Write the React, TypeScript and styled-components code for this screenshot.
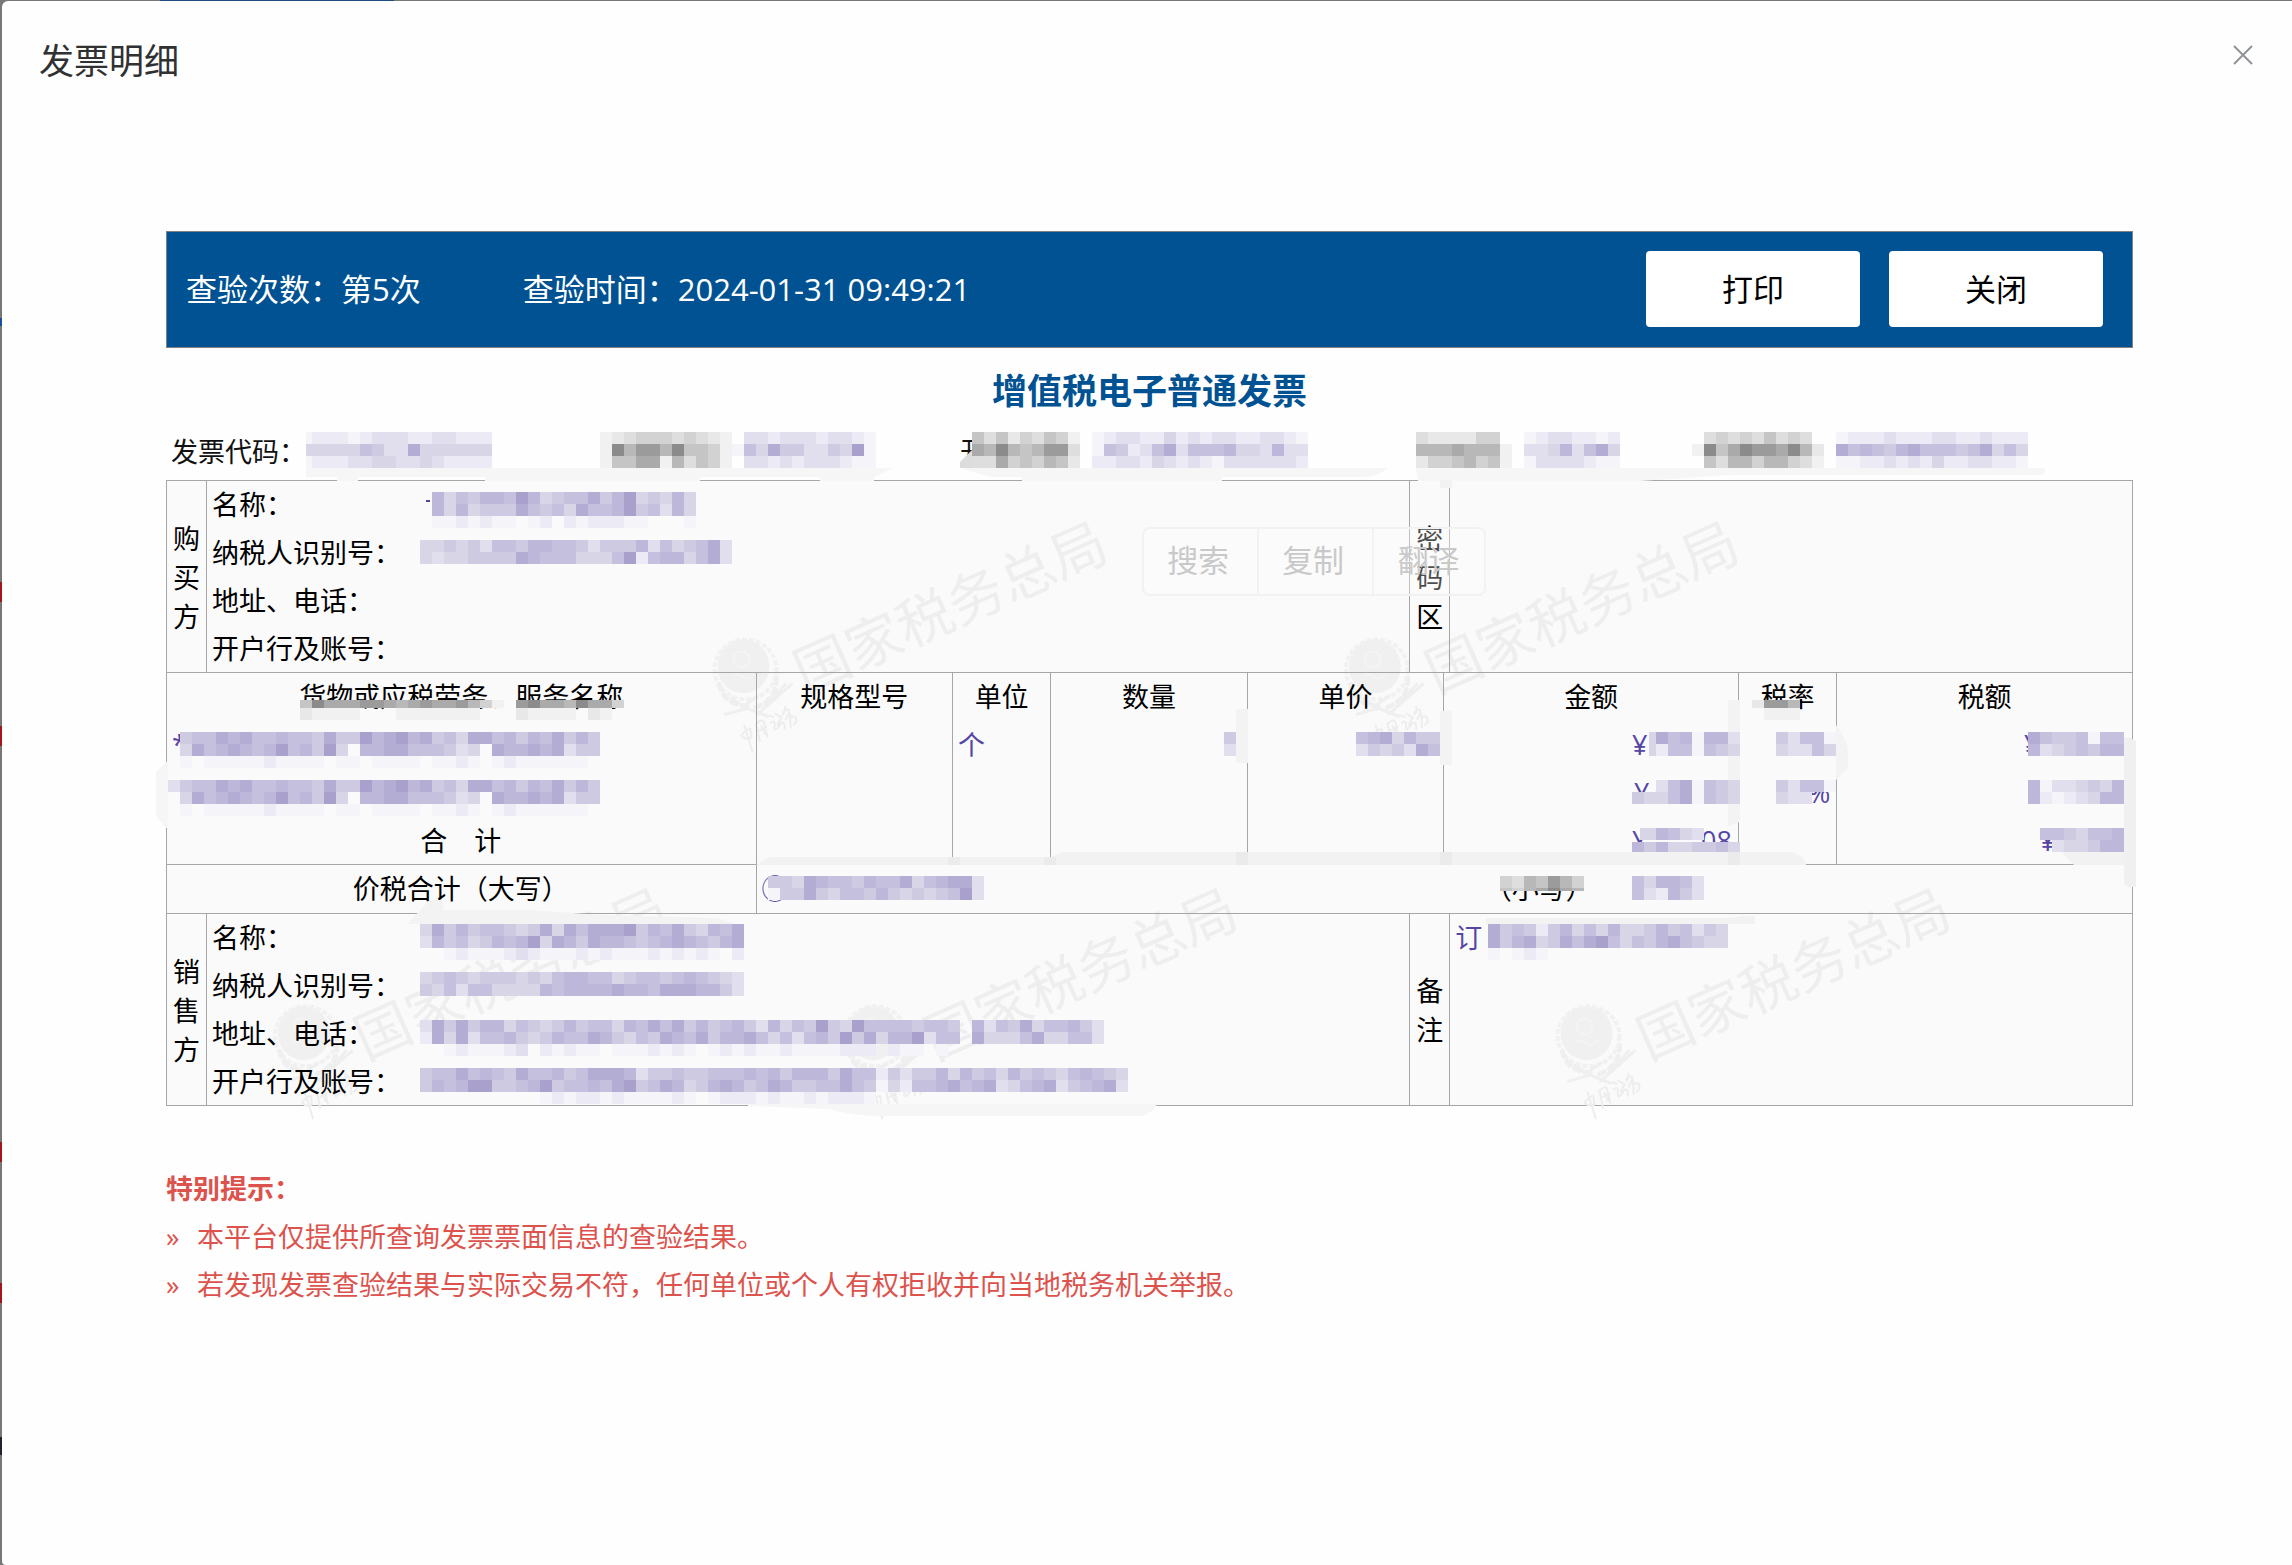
import React from "react";
import styled, { createGlobalStyle } from "styled-components";

const BLUE = "#005293";
const LINE = "#a6a6a6";
const VALUE = "#5546a5";

const GlobalStyle = createGlobalStyle`
  * { box-sizing: border-box; }
  body {
    margin: 0;
    background: #777;
    color: #000;
    font-family: "Open Sans", "Noto Sans CJK SC", sans-serif;
    font-size: 27px;
    line-height: 48px;
  }
`;

const Backdrop = styled.div`
  min-height: 100vh;
  padding: 1px 0 0 2px;
  background:
    linear-gradient(#1f4a80, #1f4a80) 160px 0 / 234px 1px no-repeat,
    linear-gradient(#a3161b, #a3161b) 0 582px / 2px 20px no-repeat,
    linear-gradient(#a3161b, #a3161b) 0 726px / 2px 20px no-repeat,
    linear-gradient(#a3161b, #a3161b) 0 1142px / 2px 20px no-repeat,
    linear-gradient(#a3161b, #a3161b) 0 1283px / 2px 20px no-repeat,
    linear-gradient(#1a4f9a, #1a4f9a) 0 318px / 2px 8px no-repeat,
    linear-gradient(#22222c, #22222c) 0 1437px / 2px 18px no-repeat,
    #777;
`;

const Dialog = styled.main`
  min-height: calc(100vh - 1px);
  background: #fefefe;
  border-radius: 6px 0 0 4px;
`;

const DialogHeader = styled.header`
  display: flex;
  justify-content: space-between;
  align-items: flex-start;
  padding: 34px 29px 0 37px;
`;

const DialogTitle = styled.h1`
  margin: 0;
  font-size: 35px;
  line-height: 52px;
  font-weight: 400;
  color: #303133;
`;

const CloseButton = styled.button`
  display: flex;
  align-items: center;
  justify-content: center;
  width: 40px;
  height: 40px;
  padding: 0;
  border: 0;
  background: none;
  color: #909399;
`;

const Content = styled.div`
  padding: 144px 159px 48px 164px;
`;

const CheckBar = styled.section`
  display: flex;
  align-items: center;
  gap: 102px;
  height: 117px;
  padding: 0 29px 2px 19px;
  border: 1px solid #808080;
  background: ${BLUE};
  color: #fff;
  font-size: 31px;
`;

const BarActions = styled.div`
  display: flex;
  gap: 29px;
  margin-left: auto;
`;

const BarButton = styled.button`
  width: 214px;
  height: 76px;
  border: 0;
  border-radius: 4px;
  background: #fff;
  color: #000;
  font: inherit;
`;

const InvoiceTitle = styled.h2`
  margin: 5px 0 0;
  font-size: 35px;
  line-height: 76px;
  text-align: center;
  color: ${BLUE};
`;

const Invoice = styled.section`
  position: relative;
`;

const InfoRow = styled.div`
  display: grid;
  grid-template-columns: 434fr 360fr 456fr 276fr 441fr;
  height: 51px;
  line-height: 46px;
  color: #111;
`;

const InfoField = styled.span<{ $inset?: boolean }>`
  padding-left: ${(p) => (p.$inset ? 5 : 0)}px;
`;

const Frame = styled.div`
  position: relative;
  border: 1px solid ${LINE};
  background: #fafafa;
`;

const Party = styled.div<{ $last?: boolean }>`
  position: relative;
  display: grid;
  grid-template-columns: 40px 1fr 40px 34.7%;
  border-bottom: ${(p) => (p.$last ? 0 : 1)}px solid ${LINE};
  height: ${(p) => (p.$last ? 191 : 192)}px;
`;

const SideLabel = styled.div`
  display: flex;
  align-items: center;
  justify-content: center;
  padding: 0 6px;
  border-right: 1px solid ${LINE};
  line-height: 39px;
  text-align: center;
`;

const FieldList = styled.ul`
  margin: 0;
  padding: 0 0 0 5px;
  list-style: none;
  border-right: 1px solid ${LINE};
`;

const Remark = styled.div`
  padding-left: 5px;
  color: ${VALUE};
`;

const Items = styled.table`
  position: relative;
  width: 100%;
  table-layout: fixed;
  border-collapse: separate;
  border-spacing: 0;
`;

const Head = styled.th<{ $w: number }>`
  width: ${(p) => p.$w}%;
  height: 48px;
  padding: 0;
  font-weight: 400;
  border-right: 1px solid ${LINE};
  &:last-child { border-right: 0; }
`;

const Cell = styled.td<{ $align?: string; $end?: boolean }>`
  height: 48px;
  padding: 0 6px 0 5px;
  line-height: 46px;
  text-align: ${(p) => p.$align || "left"};
  color: ${VALUE};
  border-right: 1px solid ${LINE};
  border-bottom: ${(p) => (p.$end ? 1 : 0)}px solid ${LINE};
  &:last-child { border-right: 0; }
`;

const TotalLabel = styled(Cell)`
  height: 49px;
  color: #000;
`;

const Total = styled.div`
  display: grid;
  grid-template-columns: 53% 1fr;
`;

const Black = styled.span`
  color: #000;
`;

/* amount cells keep the currency sign at a fixed distance from the right edge */
const Sign = styled.span<{ $w: number }>`
  display: inline-block;
  width: ${(p) => p.$w}px;
  text-align: left;
`;

const Split = styled.span<{ $w: number }>`
  display: inline-flex;
  justify-content: space-between;
  width: ${(p) => p.$w}px;
`;

const Layer = styled.svg`
  position: absolute;
  inset: 0;
  width: 100%;
  height: 100%;
  overflow: visible;
  pointer-events: none;
`;

const SelectionMenu = styled.div`
  position: absolute;
  top: 46px;
  left: 49.6%;
  display: flex;
  height: 69px;
  border: 2px solid #f2f2f2;
  border-radius: 8px;
  background: rgba(255, 255, 255, 0.3);
`;

const MenuButton = styled.button`
  width: 115px;
  padding: 0 4px 4px 0;
  border: 0;
  border-right: 2px solid #f2f2f2;
  background: none;
  color: #c9c9c9;
  font: inherit;
  font-size: 31px;
  &:last-child { width: 110px; border-right: 0; padding-right: 0; }
`;

const Tips = styled.section`
  margin-top: 59px;
  color: #dc534d;
`;

const TipsTitle = styled.h3`
  margin: 0;
  font-size: 27px;
`;

const TipList = styled.ul`
  margin: 0;
  padding: 0;
  list-style: none;
`;

const Tip = styled.li`
  display: flex;
  &::before { content: "»"; width: 31px; flex: none; }
`;

const PURPLE = ["", "#f5f4f9", "#eceaf4", "#e1dfed", "#d8d5e7", "#cecae1", "#c5c0dd", "#bdb7d9", "#b3acd3", "#a9a1cb"];
const GRAY = ["", "#f1f1f1", "#e8e8e8", "#dedede", "#d2d2d2", "#c5c5c5", "#b8b8b8", "#aaaaaa", "#9b9b9b", "#8b8b8b"];
const CELL = 12;

type Patch = { x: number; y: number; rows: string[]; gray?: boolean; head?: number; tail?: number };

const ITEM = [
  "56687866766585597897856488675768575",
  "48678767967594077886665340877878355",
  "10111112111101101111011210121111110",
];

const PATCHES: Patch[] = [
  { x: 306, y: 432, rows: ["1", "4", "1"] },
  { x: 312, y: 432, rows: ["222123332233222", "444465338444444", "222334433432222"] },
  { x: 600, y: 432, gray: true, rows: ["12344434321", "19688695541", "15577163541"] },
  { x: 732, y: 432, rows: ["033233323321", "164855335491", "033232333211"] },
  { x: 972, y: 432, gray: true, rows: ["535243541", "769656883", "337454652"] },
  { x: 1092, y: 432, rows: ["123322423233223321", "165236836667443733", "223324323213333332"] },
  { x: 1416, y: 432, gray: true, rows: ["32222440", "66676661", "24456451"] },
  { x: 1524, y: 432, rows: ["12332212", "33473684", "13333211"] },
  { x: 1692, y: 432, gray: true, rows: ["03434353430", "19579887962", "05366466431"] },
  { x: 1836, y: 432, rows: ["1222322233223222", "8676578666568464", "1122323242233221"] },

  { x: 432, y: 492, rows: ["7465776974566857945474", "7474555865648667956374", "1121211012021222110001"] },
  { x: 420, y: 540, rows: ["44545366577665355573645683", "43445555876664446926774683"] },

  { x: 300, y: 696, gray: true, head: 8, rows: ["59777887678778641", "21111000111111100"] },
  { x: 516, y: 696, gray: true, head: 8, rows: ["897769774", "211110210"] },
  { x: 1752, y: 696, gray: true, head: 8, rows: ["28860", "01110"] },
  { x: 180, y: 732, rows: ITEM },
  { x: 168, y: 780, rows: ["3" + ITEM[0], "0" + ITEM[1], "0" + ITEM[2]] },
  { x: 1224, y: 732, rows: ["5", "3"] },
  { x: 1356, y: 732, rows: ["6784755", "3545386"] },
  { x: 1649, y: 732, rows: ["4", "4"] },
  { x: 1656, y: 732, rows: ["8671773", "2661654"] },
  { x: 1656, y: 780, rows: ["3681654"] },
  { x: 1632, y: 792, rows: ["544681654"] },
  { x: 1640, y: 828, rows: ["4"] },
  { x: 1644, y: 828, rows: ["47643"] },
  { x: 1632, y: 840, head: 10, rows: ["757445564"] },
  { x: 1776, y: 732, rows: ["53661", "43364"] },
  { x: 1776, y: 780, rows: ["53661", "433"] },
  { x: 2028, y: 732, rows: ["86556166", "73456577"] },
  { x: 2028, y: 780, rows: ["71334547", "72123477"] },
  { x: 2040, y: 828, rows: ["6654667", "0344577"] },
  { x: 768, y: 876, rows: ["554876657668467883", "155854665754545693"] },
  { x: 1500, y: 876, gray: true, tail: 3, rows: ["4365864", "5467976"] },
  { x: 1632, y: 876, rows: ["647763", "632753"] },

  { x: 420, y: 924, rows: ["485756654584868889576854768", "375645767948758776567876578", "001211123211121211121212102"] },
  { x: 420, y: 972, rows: ["456545554546776645665676543", "546366444476777787768887753"] },
  {
    x: 420, y: 1020, rows: [
      "385857746545756647686857567537465954966665665073658466753",
      "284836675457668754658768577864636759584779366084446844663",
      "001211123021211011121210121211211112220211010",
    ],
  },
  {
    x: 420, y: 1068, rows: [
      "56686765866756888735565566676757775866253557475647565467654",
      "57679955679566768956874578756875566865142667867834678356783",
      "00000000001212212111121012221211212221",
    ],
  },
  { x: 1488, y: 924, rows: ["85652574647445756354", "85784586896465786544", "10121000000000000000"] },
];

/* smears of flat grey left round the pixelated areas */
const SMEARS: [string, string][] = [
  ["#f6f6f6", "M306 468H893L874 477H306ZM337 476H358V481H337ZM485 476H700V481H485ZM820 476H874V481H820Z"],
  ["#f6f6f6", "M960 468H1387Q1380 476 1366 477H990ZM1022 476H1222V481H1022Z"],
  ["#f6f6f6", "M1416 468H2045V473L2040 475H1730L1640 481H1418Z"],
  ["#dcdcdc", "M960 466V462L972 450V468H960Z"],
  ["#f2f2f2", "M1440 480H1452V488H1440Z"],
  ["#f6f6f6", "M156 772L166 762H168V828H166L156 816Z"],
  ["#f3f3f3", "M1236 709H1248V763H1236ZM1440 711H1452V765H1440ZM1728 700H1740V822L1728 826Z"],
  ["#f3f3f3", "M1836 725Q1848 740 1848 752V768L1836 780Z"],
  ["#f0f0f0", "M2124 738H2130L2136 741V887H2128L2124 884Z"],
  ["#f2f2f2", "M756 865L770 857H1051L1062 852H1790Q1805 855 1806 865Z"],
  ["#f2f2f2", "M2062 852H2124V865H2074Z"],
  ["#ebebeb", "M948 857H960V865H948ZM1044 857H1056V865H1044ZM1236 852H1248V865H1236ZM1440 852H1452V865H1440ZM1728 852H1740V865H1728Z"],
  ["#f3f3f3", "M407 924L430 900H443V910H530L600 915L715 918Q735 922 740 930V924Z"],
  ["#f2f2f2", "M1486 918H1730L1745 916H1755V924H1486Z"],
  ["#f6f6f6", "M748 1104H1157Q1154 1112 1142 1116H880Q850 1116 830 1109L748 1106Z"],
  [VALUE, "M426 500H430V502H426Z"],
];

const MosaicLayer = () => (
  <Layer viewBox="166 429 1967 677" preserveAspectRatio="none" aria-hidden="true">
    {SMEARS.map(([fill, d]) => <path key={d} fill={fill} d={d} />)}
    {PATCHES.map((p) =>
      p.rows.map((row, r) => {
        const head = r === 0 && p.head ? CELL - p.head : 0;
        const height = r === p.rows.length - 1 && p.tail ? p.tail : CELL - head;
        return row.split("").map((c, i) =>
          c === "0" ? null : (
            <rect
              key={`${p.x}-${p.y}-${r}-${i}`}
              x={p.x + i * CELL}
              y={p.y + r * CELL + head}
              width={CELL}
              height={height}
              fill={(p.gray ? GRAY : PURPLE)[Number(c)]}
              shapeRendering="crispEdges"
            />
          )
        );
      })
    )}
  </Layer>
);

const Stamp = ({ x, y }: { x: number; y: number }) => (
  <g transform={`translate(${x} ${y})`}>
    <g transform="translate(-77 7)">
      <ellipse cx="-2" cy="-4" rx="26" ry="27" fill="#f0f0f0" />
      <ellipse rx="31" ry="30" cy="-1" fill="none" stroke="#f1f1f1" strokeWidth="4" strokeDasharray="5 2" />
      <g fill="none" stroke="#f4f4f4" strokeWidth="2">
        <circle cx="-4" cy="-11" r="8" />
        <path d="M-14 6q6-5 11 0t13-3" />
      </g>
      <g fill="none" stroke="#efefef" strokeWidth="5" strokeLinecap="round">
        <path d="M-26 14Q-22 34 2 36" strokeDasharray="5 6" />
        <path d="M31 8Q32 30 8 38" strokeDasharray="5 6" />
        <path d="M-14 28l12 8 14-10M-20 44l22-6 20 8M20 36l20-22M12 44l34-30" strokeWidth="3" />
      </g>
    </g>
    <g fill="none" stroke="#ededed" strokeWidth="2" strokeLinecap="round" transform="translate(-50 63) rotate(-26)">
      <path d="M-32-5q8-4 11-2l-3 8q-6 1-8-6M-25-13q-2 14-4 27M-14-8q-2 10-4 16M-14-9q9-3 8 2l-3 14M-13-2h7M-10-5v9M2-11l3 3M0-4q6-1 2 5t6 1M8-10l4 6-7 5q10-2 5 7M20-12q-2 5-5 6M16-8q8-2 5 3l-6 5M20 0q8 0 3 7l-3 1M21-3l-5 12" />
    </g>
    <text transform="rotate(-24)" x="-28" y="21" fontSize="56" fill="#eeeeee">国家税务总局</text>
  </g>
);

const Watermark = () => (
  <Layer viewBox="166 479 1967 626" preserveAspectRatio="none" aria-hidden="true">
    <Stamp x={822} y={662} />
    <Stamp x={1454} y={662} />
    <Stamp x={382} y={1030} />
    <Stamp x={952} y={1030} />
    <Stamp x={1666} y={1030} />
  </Layer>
);

const FIELDS = ["名称：", "纳税人识别号：", "地址、电话：", "开户行及账号："];

const PartyBlock = ({ side, note, remark, last }: { side: string; note: string; remark?: string; last?: boolean }) => (
  <Party $last={last}>
    <SideLabel>{side}</SideLabel>
    <FieldList>{FIELDS.map((f) => <li key={f}>{f}</li>)}</FieldList>
    <SideLabel>{note}</SideLabel>
    <Remark>{remark}</Remark>
  </Party>
);

const COLUMNS: [string, number][] = [
  ["货物或应税劳务、服务名称", 30],
  ["规格型号", 10],
  ["单位", 5],
  ["数量", 10],
  ["单价", 10],
  ["金额", 15],
  ["税率", 5],
  ["税额", 15],
];

export default function App() {
  return (
    <>
      <GlobalStyle />
      <Backdrop>
        <Dialog>
          <DialogHeader>
            <DialogTitle>发票明细</DialogTitle>
            <CloseButton aria-label="关闭">
              <svg width="20" height="20" viewBox="0 0 20 20" fill="none" stroke="currentColor" strokeWidth="2">
                <path d="M1 1L19 19M19 1L1 19" />
              </svg>
            </CloseButton>
          </DialogHeader>
          <Content>
            <CheckBar>
              <span>查验次数：第5次</span>
              <span>查验时间：2024-01-31 09:49:21</span>
              <BarActions>
                <BarButton>打印</BarButton>
                <BarButton>关闭</BarButton>
              </BarActions>
            </CheckBar>
            <InvoiceTitle>增值税电子普通发票</InvoiceTitle>
            <Invoice>
              <InfoRow>
                <InfoField $inset>发票代码：</InfoField>
                <InfoField />
                <InfoField>开</InfoField>
                <InfoField />
                <InfoField />
              </InfoRow>
              <Frame>
                <Watermark />
                <PartyBlock side="购买方" note="密码区" />
                <Items>
                  <thead>
                    <tr>{COLUMNS.map(([name, w]) => <Head key={name} $w={w} scope="col">{name}</Head>)}</tr>
                  </thead>
                  <tbody>
                    <tr>
                      <Cell>*</Cell>
                      <Cell />
                      <Cell>个</Cell>
                      <Cell />
                      <Cell />
                      <Cell $align="right"><Sign $w={100}>¥</Sign></Cell>
                      <Cell />
                      <Cell $align="right"><Sign $w={102}>¥</Sign></Cell>
                    </tr>
                    <tr>
                      <Cell />
                      <Cell />
                      <Cell />
                      <Cell />
                      <Cell />
                      <Cell $align="right"><Sign $w={98}>¥</Sign></Cell>
                      <Cell $align="right">%</Cell>
                      <Cell />
                    </tr>
                    <tr>
                      <Cell $end $align="center"><Black>合　计</Black></Cell>
                      <Cell $end />
                      <Cell $end />
                      <Cell $end />
                      <Cell $end />
                      <Cell $end $align="right"><Split $w={100}><span>¥</span><span>08</span></Split></Cell>
                      <Cell $end />
                      <Cell $end $align="right"><Sign $w={86}>¥</Sign></Cell>
                    </tr>
                    <tr>
                      <TotalLabel $end $align="center">价税合计（大写）</TotalLabel>
                      <Cell $end colSpan={7}>
                        <Total>
                          <span>ⓧ</span>
                          <Black>（小写）</Black>
                        </Total>
                      </Cell>
                    </tr>
                  </tbody>
                </Items>
                <PartyBlock side="销售方" note="备注" remark="订" last />
                <SelectionMenu>
                  <MenuButton>搜索</MenuButton>
                  <MenuButton>复制</MenuButton>
                  <MenuButton>翻译</MenuButton>
                </SelectionMenu>
              </Frame>
              <MosaicLayer />
            </Invoice>
            <Tips>
              <TipsTitle>特别提示：</TipsTitle>
              <TipList>
                <Tip>本平台仅提供所查询发票票面信息的查验结果。</Tip>
                <Tip>若发现发票查验结果与实际交易不符，任何单位或个人有权拒收并向当地税务机关举报。</Tip>
              </TipList>
            </Tips>
          </Content>
        </Dialog>
      </Backdrop>
    </>
  );
}
